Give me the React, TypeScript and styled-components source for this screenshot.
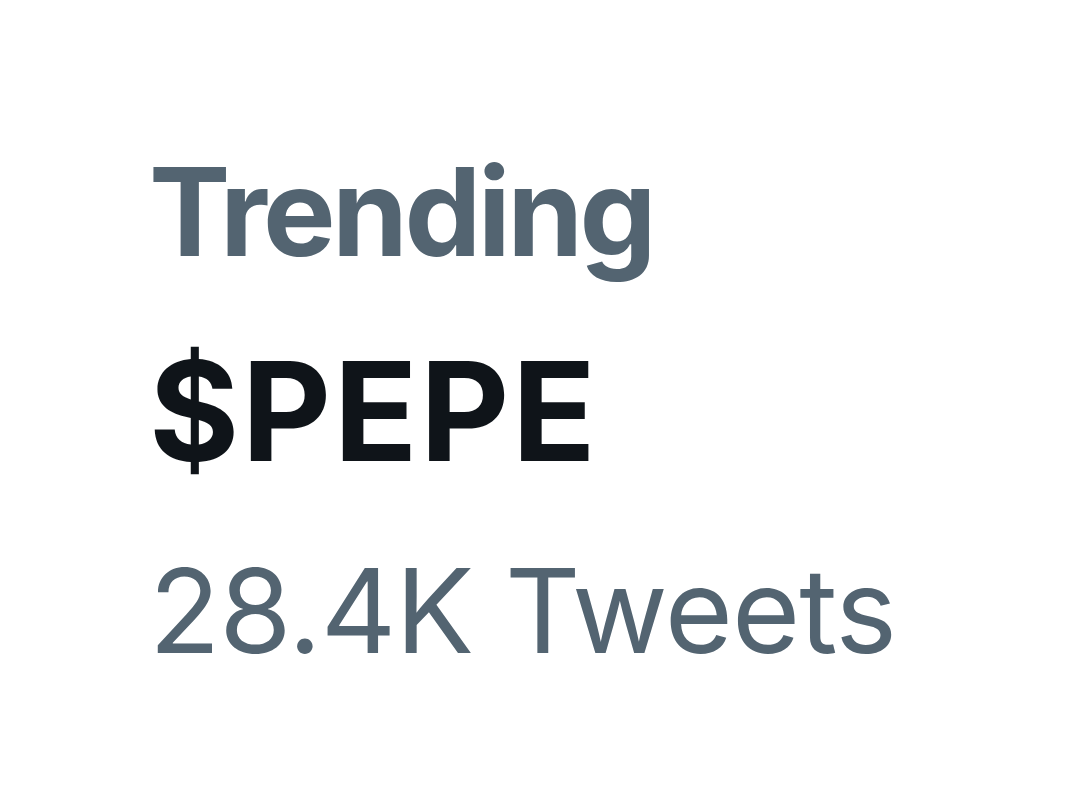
import React from "react";
import styled, { createGlobalStyle } from "styled-components";

const Global = createGlobalStyle`
  html, body { margin: 0; padding: 0; background: #ffffff; }
  body { font-family: Inter, "Noto Sans", sans-serif; }
`;

const Page = styled.div`
  width: 1080px;
  height: 808px;
  box-sizing: border-box;
  padding: 151px 0 0 149px;
  display: flex;
  flex-direction: column;
  background: #ffffff;
`;

const Label = styled.div`
  font-family: Inter, "Noto Sans", sans-serif;
  font-weight: 700;
  font-size: 122px;
  line-height: 1;
  color: #536471;
  letter-spacing: -3.6px;
`;

const Title = styled.div`
  font-family: Inter, "Noto Sans", sans-serif;
  font-weight: 700;
  font-size: 138px;
  line-height: 1;
  color: #0f1419;
  margin-top: 69px;
  letter-spacing: 2.5px;
`;

const Count = styled.div`
  font-family: Inter, "Noto Sans", sans-serif;
  font-weight: 400;
  font-size: 117px;
  line-height: 1;
  color: #536471;
  margin-top: 72px;
  letter-spacing: -1px;
`;

export default function App() {
  return (
    <>
      <Global />
      <Page>
        <Label>Trending</Label>
        <Title>$PEPE</Title>
        <Count>28.4K Tweets</Count>
      </Page>
    </>
  );
}
